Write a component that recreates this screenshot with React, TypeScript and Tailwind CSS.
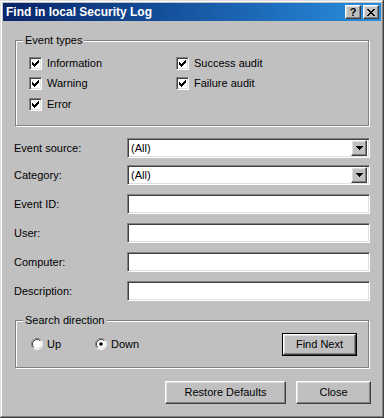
import React from 'react';

const raised =
  'border border-t-white border-l-white border-r-[#404040] border-b-[#404040] shadow-[inset_-1px_-1px_0_#808080,inset_1px_1px_0_#dfdfdf] bg-[#c0c0c0]';
const sunken =
  'border border-t-[#808080] border-l-[#808080] border-r-white border-b-white shadow-[inset_1px_1px_0_#404040,inset_-1px_-1px_0_#dfdfdf] bg-white';

const CheckBox: React.FC = () => (
  <span className={`w-[13px] h-[13px] flex items-center justify-center shrink-0 ${sunken}`}>
    <svg width="7" height="7" viewBox="0 0 7 7" shapeRendering="crispEdges">
      {[2, 3, 4, 3, 2, 1, 0].map((y, x) => (
        <rect key={x} x={x} y={y} width="1" height="3" fill="#000" />
      ))}
    </svg>
  </span>
);

const Radio: React.FC<{ checked?: boolean }> = ({ checked }) => (
  <svg width="12" height="12" viewBox="0 0 12 12" className="shrink-0">
    <circle cx="6" cy="6" r="5" fill="#fff" />
    <path d="M2.11 9.89 A5.5 5.5 0 0 1 9.89 2.11" stroke="#808080" fill="none" />
    <path d="M9.89 2.11 A5.5 5.5 0 0 1 2.11 9.89" stroke="#fff" fill="none" />
    <path d="M2.82 9.18 A4.5 4.5 0 0 1 9.18 2.82" stroke="#404040" fill="none" />
    <path d="M9.18 2.82 A4.5 4.5 0 0 1 2.82 9.18" stroke="#dfdfdf" fill="none" />
    {checked && <circle cx="6" cy="6" r="1.8" fill="#000" />}
  </svg>
);

const DownArrow: React.FC = () => (
  <svg width="7" height="4" viewBox="0 0 7 4" shapeRendering="crispEdges">
    <rect x="0" y="0" width="7" height="1" fill="#000" />
    <rect x="1" y="1" width="5" height="1" fill="#000" />
    <rect x="2" y="2" width="3" height="1" fill="#000" />
    <rect x="3" y="3" width="1" height="1" fill="#000" />
  </svg>
);

const CloseGlyph: React.FC = () => {
  const rows: number[][] = [[0, 1, 6, 7], [1, 2, 5, 6], [2, 3, 4, 5], [3, 4], [2, 3, 4, 5], [1, 2, 5, 6], [0, 1, 6, 7]];
  return (
    <svg width="8" height="7" viewBox="0 0 8 7" shapeRendering="crispEdges">
      {rows.map((xs, y) => xs.map((x) => <rect key={`${x}-${y}`} x={x} y={y} width="1" height="1" fill="#000" />))}
    </svg>
  );
};

const GroupBox: React.FC<{ label: string; className: string; children: React.ReactNode }> = ({ label, className, children }) => (
  <div className={`relative w-[354px] border border-[#808080] shadow-[1px_1px_0_#fff,inset_1px_1px_0_#fff] ${className}`}>
    <span className="absolute left-[7px] top-[-8px] px-[2px] bg-[#c0c0c0] leading-[14px]">{label}</span>
    {children}
  </div>
);

const Combo: React.FC<{ value: string }> = ({ value }) => (
  <div className={`w-[243px] h-[20px] flex items-center pl-[3px] pr-[2px] ${sunken}`}>
    <span className="flex-1">{value}</span>
    <span className={`w-[16px] h-[16px] flex items-center justify-center ${raised}`}>
      <DownArrow />
    </span>
  </div>
);

const Field: React.FC = () => <div className={`w-[243px] h-[20px] ${sunken}`} />;

const Button: React.FC<{ label: string; className: string; isDefault?: boolean }> = ({ label, className, isDefault }) =>
  isDefault ? (
    <div className={`border border-black ${className}`}>
      <div className={`w-full h-full flex items-center justify-center ${raised}`}>{label}</div>
    </div>
  ) : (
    <div className={`flex items-center justify-center ${raised} ${className}`}>{label}</div>
  );

const ROWS = [
  { label: 'Event source:', combo: '(All)' },
  { label: 'Category:', combo: '(All)' },
];
const FIELDS = ['Event ID:', 'User:', 'Computer:', 'Description:'];

export default function App() {
  return (
    <div className="w-[384px] h-[418px] p-[3px] bg-[#c0c0c0] flex flex-col text-[11px] text-black font-['Liberation_Sans',Arial,sans-serif] shadow-[inset_-1px_-1px_0_#404040,inset_1px_1px_0_#dfdfdf,inset_-2px_-2px_0_#808080,inset_2px_2px_0_#fff]">
      {/* title bar */}
      <div className="h-[18px] flex items-center pl-[3px] pr-[2px] bg-linear-to-r from-[#0a246a] to-[#2a8ee0]">
        <span className="flex-1 text-white font-bold text-[12px]">Find in local Security Log</span>
        <span className={`w-[16px] h-[14px] flex items-center justify-center font-bold text-[11px] leading-none ${raised}`}>?</span>
        <span className={`ml-[2px] w-[16px] h-[14px] flex items-center justify-center ${raised}`}>
          <CloseGlyph />
        </span>
      </div>

      <GroupBox label="Event types" className="ml-[12px] mt-[19px] h-[86px] pt-[16px] pl-[13px]">
        <div className="grid grid-cols-[147px_1fr] grid-rows-[20px_21px_13px]">
          {[['Information', 'Success audit'], ['Warning', 'Failure audit'], ['Error', '']].map((pair, i) =>
            pair.map((txt, j) =>
              txt ? (
                <div key={`${i}-${j}`} className="flex items-start gap-[5px]">
                  <CheckBox />
                  <span className="leading-[13px]">{txt}</span>
                </div>
              ) : (
                <div key={`${i}-${j}`} />
              )
            )
          )}
        </div>
      </GroupBox>

      <div className="ml-[11px] mt-[12px] flex flex-col">
        {ROWS.map((r, i) => (
          <div key={r.label} className={`flex items-center ${i > 0 ? 'mt-[7px]' : ''}`}>
            <span className="w-[113px]">{r.label}</span>
            <Combo value={r.combo} />
          </div>
        ))}
        {FIELDS.map((f) => (
          <div key={f} className="flex items-center mt-[9px]">
            <span className="w-[113px]">{f}</span>
            <Field />
          </div>
        ))}
      </div>

      <GroupBox label="Search direction" className="ml-[12px] mt-[19px] h-[48px] flex items-center pl-[15px] pr-[11px]">
        <div className="flex items-center gap-[4px] w-[64px]">
          <Radio />
          <span>Up</span>
        </div>
        <div className="flex items-center gap-[4px]">
          <Radio checked />
          <span>Down</span>
        </div>
        <div className="flex-1" />
        <Button label="Find Next" className="w-[75px] h-[23px]" isDefault />
      </GroupBox>

      <div className="mt-[13px] flex justify-end gap-[10px] pr-[10px]">
        <Button label="Restore Defaults" className="w-[121px] h-[23px]" />
        <Button label="Close" className="w-[75px] h-[23px]" />
      </div>
    </div>
  );
}
